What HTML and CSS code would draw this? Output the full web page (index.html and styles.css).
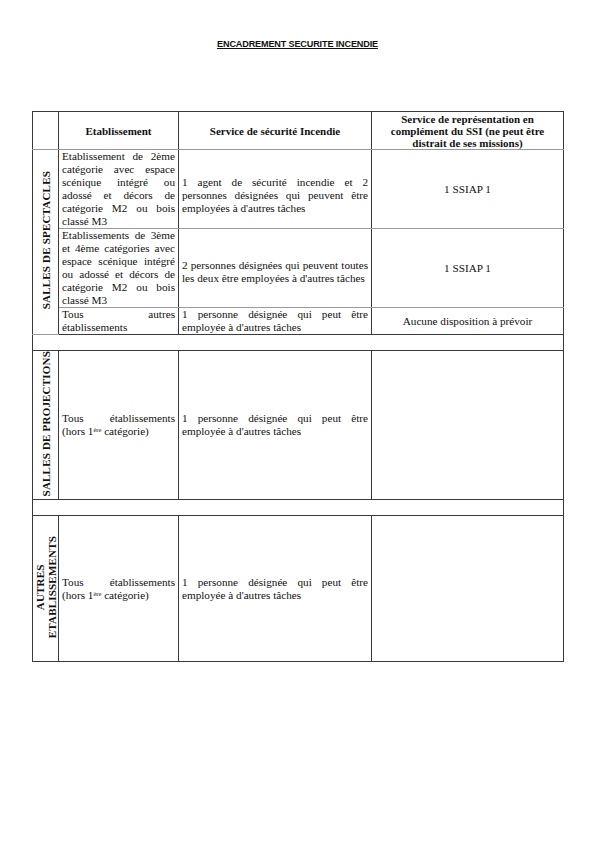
FILE: index.html
```html
<!DOCTYPE html>
<html lang="fr">
<head>
<meta charset="utf-8">
<title>Encadrement sécurité incendie</title>
<link rel="stylesheet" href="styles.css">
</head>
<body>
<h1 class="title">ENCADREMENT SECURITE INCENDIE</h1>
<table class="grid">
  <colgroup>
    <col class="c-label">
    <col class="c-etab">
    <col class="c-serv">
    <col class="c-rep">
  </colgroup>
  <tr class="head">
    <th></th>
    <th>Etablissement</th>
    <th>Service de sécurité Incendie</th>
    <th>Service de représentation en complément du SSI (ne peut être distrait de ses missions)</th>
  </tr>
  <tr class="r1">
    <td class="side" rowspan="3"><span class="vert">SALLES DE SPECTACLES</span></td>
    <td class="just">Etablissement de 2ème catégorie avec espace scénique intégré ou adossé et décors de catégorie M2 ou bois classé M3</td>
    <td class="just shift">1 agent de sécurité incendie et 2 personnes désignées qui peuvent être employées à d'autres tâches</td>
    <td class="center">1 SSIAP 1</td>
  </tr>
  <tr class="r2">
    <td class="just">Etablissements de 3ème et 4ème catégories avec espace scénique intégré ou adossé et décors de catégorie M2 ou bois classé M3</td>
    <td class="just shift2">2 personnes désignées qui peuvent toutes les deux être employées à d'autres tâches</td>
    <td class="center">1 SSIAP 1</td>
  </tr>
  <tr class="r3">
    <td class="just">Tous autres établissements</td>
    <td class="just">1 personne désignée qui peut être employée à d'autres tâches</td>
    <td class="center">Aucune disposition à prévoir</td>
  </tr>
  <tr class="spacer"><td colspan="4"></td></tr>
  <tr class="r4">
    <td class="side"><span class="vert">SALLES DE PROJECTIONS</span></td>
    <td class="just">Tous établissements (hors 1<sup>ère</sup> catégorie)</td>
    <td class="just">1 personne désignée qui peut être employée à d'autres tâches</td>
    <td></td>
  </tr>
  <tr class="spacer"><td colspan="4"></td></tr>
  <tr class="r5">
    <td class="side"><span class="vert">AUTRES<br>ETABLISSEMENTS</span></td>
    <td class="just">Tous établissements (hors 1<sup>ère</sup> catégorie)</td>
    <td class="just">1 personne désignée qui peut être employée à d'autres tâches</td>
    <td></td>
  </tr>
</table>
</body>
</html>
```
FILE: styles.css
```css
html, body {
  margin: 0;
  padding: 0;
  background: #fff;
}
body {
  font-family: "Liberation Serif", "Times New Roman", serif;
  color: #111;
}
.title {
  font-family: "Liberation Sans", Arial, sans-serif;
  font-size: 9.1px;
  font-weight: bold;
  text-decoration: underline;
  text-align: center;
  margin: 39px 0 0 0;
  line-height: 10px;
  letter-spacing: -0.15px;
}
.grid {
  border-collapse: collapse;
  table-layout: fixed;
  width: 531px;
  margin: 62px 0 0 32px;
  font-family: "Liberation Serif", "Times New Roman", serif;
  font-size: 11.2px;
  line-height: 13px;
}
.c-label { width: 26px; }
.c-etab { width: 120px; }
.c-serv { width: 193px; }
.c-rep { width: 192px; }
.grid th, .grid td {
  border: 1px solid #3a3a3a;
  padding: 0 3px 0 3px;
  vertical-align: middle;
}
.grid th {
  font-weight: bold;
  text-align: center;
  font-size: 11px;
  line-height: 12px;
}
.head { height: 38px; }
.head th { border-bottom-color: #9a9a9a; }
.r1 { height: 78px; }
.r2 { height: 77px; }
.r3 { height: 26px; }
.r1 td, .r2 td { border-bottom-color: #9a9a9a; }
.spacer td { height: 15px; padding: 0; }
.r4 { height: 149px; }
.r5 { height: 146px; }
.just { text-align: justify; }
.center { text-align: center; }
.shift { padding-top: 12px !important; }
.shift2 { padding-top: 8px !important; }
.side {
  padding: 0 !important;
  text-align: center;
}
.vert {
  display: inline-block;
  writing-mode: vertical-rl;
  transform: rotate(180deg);
  font-weight: bold;
  font-size: 11px;
  line-height: 12px;
  text-align: center;
  letter-spacing: 0.2px;
}
.side-first .vert { margin-top: 6px; }
sup {
  font-size: 6.5px;
  line-height: 0;
  vertical-align: 3px;
}
```
